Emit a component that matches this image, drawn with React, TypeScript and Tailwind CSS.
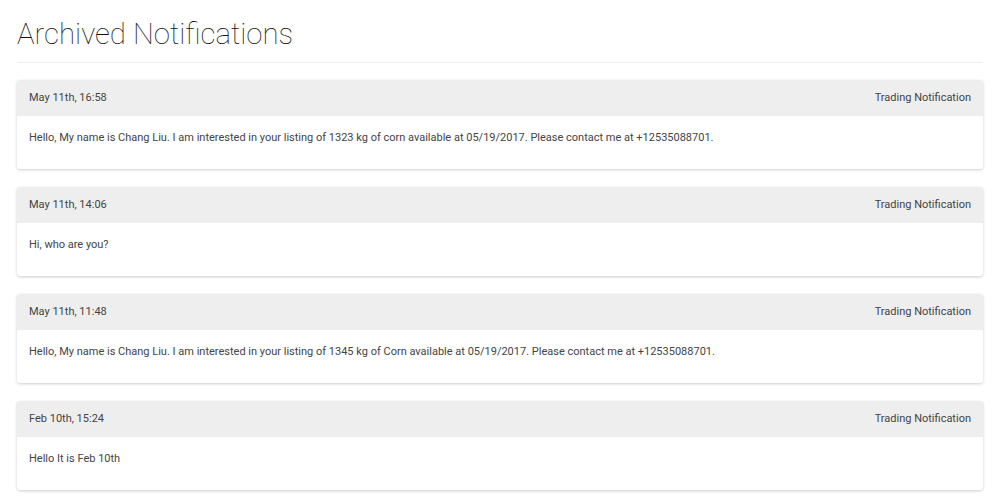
const notifications = [
  {
    id: 1,
    date: 'May 11th, 16:58',
    type: 'Trading Notification',
    message:
      'Hello, My name is Chang Liu. I am interested in your listing of 1323 kg of corn available at 05/19/2017. Please contact me at +12535088701.',
  },
  { id: 2, date: 'May 11th, 14:06', type: 'Trading Notification', message: 'Hi, who are you?' },
  {
    id: 3,
    date: 'May 11th, 11:48',
    type: 'Trading Notification',
    message:
      'Hello, My name is Chang Liu. I am interested in your listing of 1345 kg of Corn available at 05/19/2017. Please contact me at +12535088701.',
  },
  { id: 4, date: 'Feb 10th, 15:24', type: 'Trading Notification', message: 'Hello It is Feb 10th' },
]

export default function App() {
  return (
    <div className="min-h-screen bg-white px-[17px] font-['Roboto',sans-serif] text-[#444]">
      <h1 className="pt-[16px] pb-[10px] text-[29.4px] leading-[36px] font-thin text-[#111]">
        Archived Notifications
      </h1>
      <hr className="border-t border-[#eee]" />

      <div className="mt-[17px] flex flex-col gap-[18px]">
        {notifications.map((n) => (
          <div
            key={n.id}
            className="rounded-[3px] bg-white shadow-[0_1px_3px_rgba(0,0,0,0.2)] overflow-hidden"
          >
            {/* Header */}
            <div className="flex h-[36px] items-center justify-between bg-[#eeeeee] px-[12px] text-[11px]">
              <span>{n.date}</span>
              <span>{n.type}</span>
            </div>
            {/* Body */}
            <div className="h-[53px] px-[12px] pt-[15px] text-[11px] leading-[14px]">{n.message}</div>
          </div>
        ))}
      </div>
    </div>
  )
}
